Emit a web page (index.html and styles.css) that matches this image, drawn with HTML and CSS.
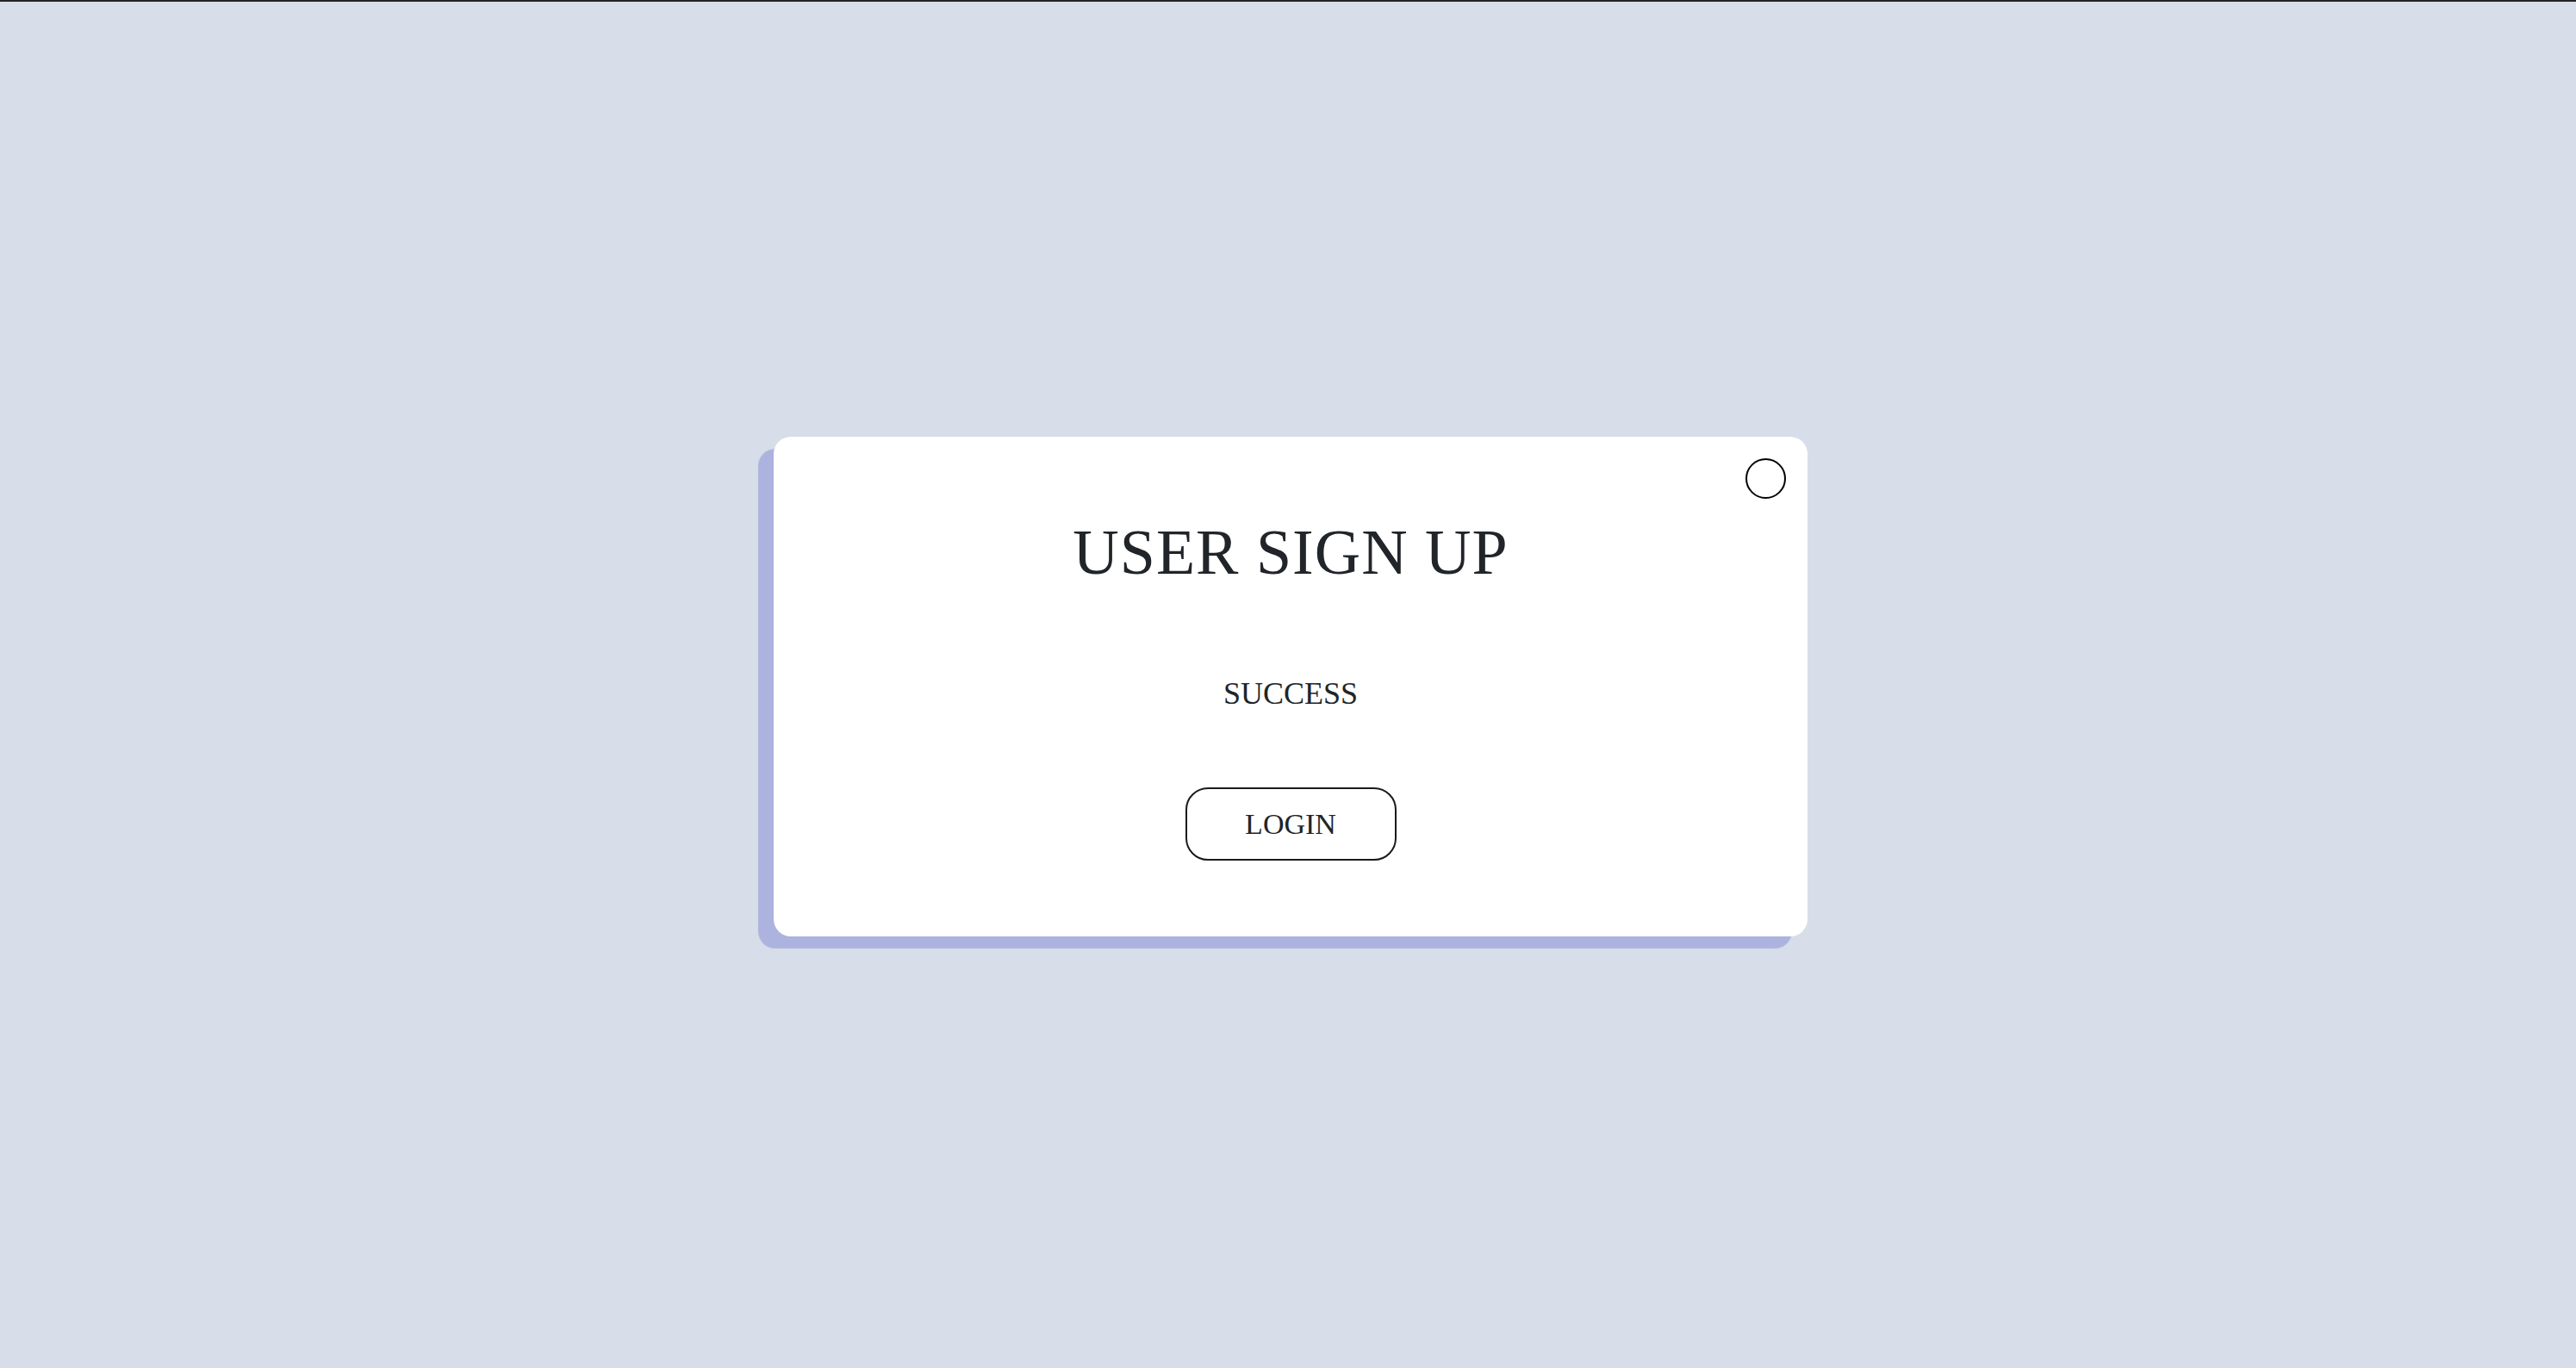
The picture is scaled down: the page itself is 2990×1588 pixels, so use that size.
FILE: index.html
```html
<!DOCTYPE html>
<html lang="en">
<head>
<meta charset="utf-8">
<title>User Sign Up</title>
<link rel="stylesheet" href="styles.css">
</head>
<body>
<div class="topline"></div>
<main class="stage">
  <section class="card">
    <button class="close" aria-label="Close"></button>
    <h1 class="title">USER SIGN UP</h1>
    <p class="message">SUCCESS</p>
    <div class="actions">
      <button class="login">LOGIN</button>
    </div>
  </section>
</main>
</body>
</html>
```
FILE: styles.css
```css
html, body {
  margin: 0;
  padding: 0;
  height: 100%;
}
body {
  background: #d7dee9;
  font-family: "Liberation Serif", "DejaVu Serif", serif;
  color: #212529;
  display: flex;
  flex-direction: column;
}
.topline {
  height: 2px;
  background: #232323;
  flex: none;
}
.stage {
  flex: 1;
  display: flex;
  align-items: center;
  justify-content: center;
  padding-left: 6px;
  padding-top: 4px;
}
.card {
  position: relative;
  width: 1200px;
  height: 580px;
  box-sizing: border-box;
  padding-top: 97px;
  background: #ffffff;
  border-radius: 20px;
  box-shadow: -18px 14px 1px #abb3de;
  display: flex;
  flex-direction: column;
  align-items: center;
}
.close {
  position: absolute;
  top: 25px;
  right: 25px;
  width: 47px;
  height: 47px;
  box-sizing: border-box;
  border: 2px solid #000;
  border-radius: 50%;
  background: transparent;
  padding: 0;
}
.title {
  margin: 0;
  text-align: center;
  font-weight: normal;
  font-size: 74px;
  line-height: 1;
  letter-spacing: 1px;
  color: #212529;
}
.message {
  margin: 109px 0 0 0;
  font-size: 36px;
  line-height: 1;
  color: #212529;
}
.actions {
  margin-top: 91px;
}
.login {
  width: 245px;
  height: 85px;
  box-sizing: border-box;
  border: 2px solid #1a1a1a;
  border-radius: 26px;
  background: #fff;
  font-family: "Liberation Serif", "DejaVu Serif", serif;
  font-size: 34px;
  line-height: 1;
  color: #212529;
  display: flex;
  align-items: center;
  justify-content: center;
  padding: 0;
}
```
